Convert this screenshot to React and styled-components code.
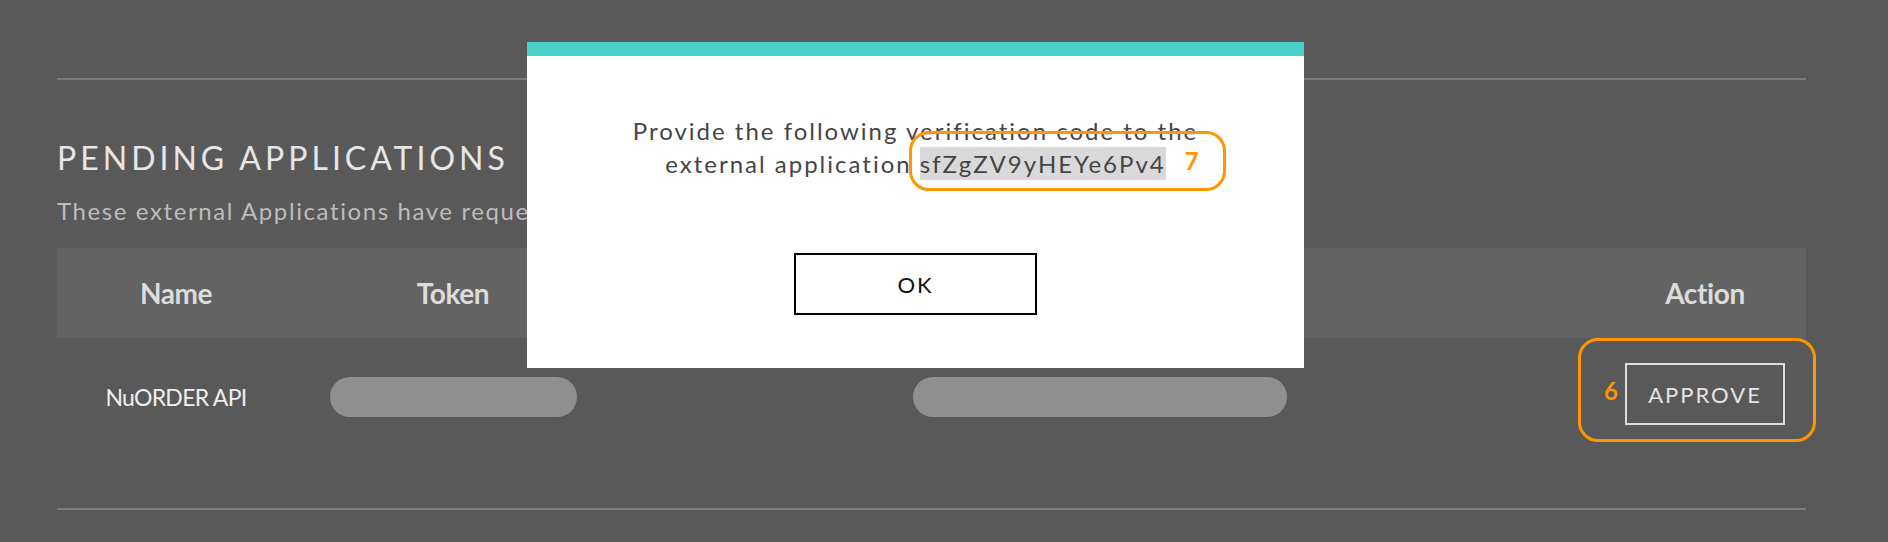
import React from 'react';
import styled, { createGlobalStyle } from 'styled-components';

const GlobalStyle = createGlobalStyle`
  html, body {
    margin: 0;
    padding: 0;
    background: #595959;
    font-family: Lato, "Open Sans", sans-serif;
  }
`;

const Pagina = styled.main`
  position: relative;
  min-height: 542px;
  padding: 78px 82px 0 57px;
  box-sizing: border-box;
`;

const Divisor = styled.hr`
  margin: 0;
  border: none;
  height: 2px;
  background: #7c7c7c;
`;

const Titulo = styled.h2`
  margin: 59px 0 0;
  font-size: 32px;
  font-weight: 400;
  line-height: 1.2;
  letter-spacing: 4px;
  color: #e6e6e6;
`;

const Subtitulo = styled.p`
  margin: 20px 0 0;
  font-size: 24px;
  line-height: 1.2;
  letter-spacing: 1.6px;
  color: #bcbcbc;
`;

const Tabela = styled.div`
  margin-top: 22px;
  padding-bottom: 52px;
`;

const Linha = styled.div`
  display: grid;
  grid-template-columns: 238px 316px 1fr 202px;
  align-items: ${(p) => (p.$cabecalho ? 'center' : 'start')};
  height: ${(p) => (p.$cabecalho ? '90px' : '118px')};
  background: ${(p) => (p.$cabecalho ? '#636363' : 'transparent')};
`;

const Celula = styled.div`
  display: flex;
  justify-content: center;
  align-items: center;
  height: ${(p) => (p.$alto ? '100%' : 'auto')};
  padding-top: ${(p) => p.$topo || 0}px;
  padding-right: ${(p) => p.$recuo || 0}px;
`;

const TituloColuna = styled.span`
  font-size: 28px;
  font-weight: 700;
  letter-spacing: -0.4px;
  color: #dcdcdc;
`;

const NomeApp = styled.span`
  font-size: 23px;
  letter-spacing: -0.7px;
  color: #eeeeee;
`;

const Pilula = styled.div`
  width: ${(p) => p.$largura}px;
  height: 40px;
  border-radius: 20px;
  background: #8f8f8f;
`;

const Ancora = styled.span`
  position: relative;
  display: inline-block;
`;

const BotaoAprovar = styled.button`
  display: block;
  width: 160px;
  height: 62px;
  background: transparent;
  border: 2px solid #dddddd;
  font-family: Lato, sans-serif;
  font-size: 22px;
  letter-spacing: 2px;
  color: #e4e4e4;
  cursor: pointer;
`;

const Marcacao = styled.span`
  position: absolute;
  display: block;
  top: ${(p) => p.$top}px;
  left: ${(p) => p.$left}px;
  width: ${(p) => p.$w}px;
  height: ${(p) => p.$h}px;
  box-sizing: border-box;
  border: 3.5px solid #ff9500;
  border-radius: 20px;
  pointer-events: none;
`;

const Numero = styled.span`
  position: absolute;
  top: ${(p) => p.$top}px;
  left: ${(p) => p.$left}px;
  font-family: Lato, sans-serif;
  font-weight: 700;
  font-size: 24px;
  line-height: 1;
  letter-spacing: 0;
  color: #ff9500;
`;

const Modal = styled.div`
  position: absolute;
  top: 42px;
  left: 527px;
  width: 777px;
  height: 326px;
  background: #ffffff;
  border-top: 14px solid #4bd0c8;
  box-sizing: border-box;
  display: flex;
  flex-direction: column;
  align-items: center;
  padding-top: 58px;
`;

const Mensagem = styled.p`
  margin: 0;
  width: 610px;
  text-align: center;
  font-size: 24px;
  line-height: 33px;
  letter-spacing: 2px;
  color: #454545;
`;

const Codigo = styled.span`
  background: #d9d9d9;
  padding: 2px 0;
`;

const BotaoOk = styled.button`
  margin-top: 73px;
  width: 243px;
  height: 62px;
  background: #ffffff;
  border: 2px solid #000000;
  font-family: Lato, sans-serif;
  font-size: 22px;
  letter-spacing: 2px;
  color: #111111;
  cursor: pointer;
`;

function App() {
  return (
    <>
      <GlobalStyle />
      <Pagina>
        <Divisor />
        <Titulo>PENDING APPLICATIONS</Titulo>
        <Subtitulo>These external Applications have requested access to your account.</Subtitulo>

        <Tabela>
          <Linha $cabecalho>
            <Celula><TituloColuna>Name</TituloColuna></Celula>
            <Celula><TituloColuna>Token</TituloColuna></Celula>
            <Celula $recuo={15}><TituloColuna>Permissions</TituloColuna></Celula>
            <Celula><TituloColuna>Action</TituloColuna></Celula>
          </Linha>
          <Linha>
            <Celula $alto><NomeApp>NuORDER API</NomeApp></Celula>
            <Celula $alto><Pilula $largura={247} /></Celula>
            <Celula $alto $recuo={15}><Pilula $largura={374} /></Celula>
            <Celula $topo={25}>
              <Ancora>
                <BotaoAprovar>APPROVE</BotaoAprovar>
                <Marcacao $top={-25} $left={-47} $w={238} $h={104}>
                  <Numero $top={38} $left={23}>6</Numero>
                </Marcacao>
              </Ancora>
            </Celula>
          </Linha>
        </Tabela>

        <Divisor />

        <Modal>
          <Mensagem>
            Provide the following verification code to the external application{' '}
            <Ancora as="span">
              <Codigo>sfZgZV9yHEYe6Pv4</Codigo>
              <Marcacao $top={-16} $left={-11} $w={317} $h={60}>
                <Numero $top={15} $left={273}>7</Numero>
              </Marcacao>
            </Ancora>
          </Mensagem>
          <BotaoOk>OK</BotaoOk>
        </Modal>
      </Pagina>
    </>
  );
}

export default App;
